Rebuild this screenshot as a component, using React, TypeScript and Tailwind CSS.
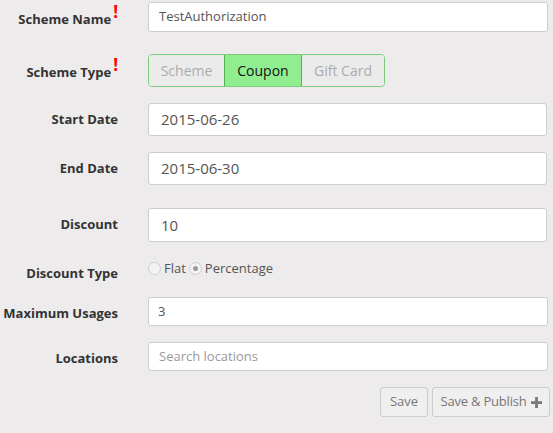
const font = { fontFamily: '"Open Sans", "Liberation Sans", sans-serif' };

function Label({ text, required, className = '' }: { text: string; required?: boolean; className?: string }) {
  return (
    <div className={`w-[118px] shrink-0 text-right text-[13px] font-bold text-[#333] ${className}`}>
      {text}
      {required && (
        <span className="relative -top-[6px] ml-[2px] text-[17px] font-bold leading-none text-[#ff0000]">!</span>
      )}
    </div>
  );
}

function Radio({ checked }: { checked?: boolean }) {
  return (
    <span className="flex h-[13px] w-[13px] items-center justify-center rounded-full border border-[#cfcfcf] bg-[#f3f3f3]">
      {checked && <span className="h-[5px] w-[5px] rounded-full bg-[#9a9a9a]" />}
    </span>
  );
}

export default function App() {
  return (
    <div className="h-[433px] w-[553px] overflow-hidden bg-[#edebeb] pt-[2px]" style={font}>
      <div className="flex h-[30px] items-center gap-[30px]">
        <Label text="Scheme Name" required className="mt-[4px]" />
        <div className="flex h-full w-[400px] items-center rounded-[3px] border border-[#cccccc] bg-white px-[10px] text-[13px] text-[#555]">
          TestAuthorization
        </div>
      </div>

      <div className="mt-[22px] flex h-[33px] items-center gap-[30px]">
        <Label text="Scheme Type" required className="mt-[4px]" />
        <div className="flex h-full overflow-hidden rounded-[4px] border border-[#7ccb7c] text-[14px]">
          <div className="flex w-[75px] items-center justify-center bg-[#ebebeb] text-[#ababab]">Scheme</div>
          <div className="flex w-[78px] items-center justify-center border-x border-[#4fb34f] bg-[#90ee90] text-[#111]">Coupon</div>
          <div className="flex w-[82px] items-center justify-center bg-[#ebebeb] text-[#ababab]">Gift Card</div>
        </div>
      </div>

      <div className="mt-[16px] flex h-[33px] items-center gap-[30px]">
        <Label text="Start Date" />
        <div className="flex h-full w-[399px] items-center rounded-[3px] border border-[#cccccc] bg-white px-[12px] text-[15px] text-[#555]">
          2015-06-26
        </div>
      </div>

      <div className="mt-[16px] flex h-[33px] items-center gap-[30px]">
        <Label text="End Date" />
        <div className="flex h-full w-[399px] items-center rounded-[3px] border border-[#cccccc] bg-white px-[12px] text-[15px] text-[#555]">
          2015-06-30
        </div>
      </div>

      <div className="mt-[23px] flex h-[34px] items-center gap-[30px]">
        <Label text="Discount" />
        <div className="flex h-full w-[399px] items-center rounded-[3px] border border-[#cccccc] bg-white px-[12px] text-[15px] text-[#555]">
          10
        </div>
      </div>

      <div className="mt-[16px] flex h-[39px] items-start gap-[30px]">
        <div className="pt-[6px]">
          <Label text="Discount Type" />
        </div>
        <div className="flex items-center gap-[3px] pt-[1px] text-[13px] text-[#555]">
          <Radio />
          <span>Flat</span>
          <Radio checked />
          <span>Percentage</span>
        </div>
      </div>

      <div className="flex h-[29px] items-center gap-[30px]">
        <Label text="Maximum Usages" className="mt-[4px]" />
        <div className="flex h-full w-[400px] items-center rounded-[3px] border border-[#cccccc] bg-white px-[9px] text-[13px] text-[#555]">
          3
        </div>
      </div>

      <div className="mt-[16px] flex h-[29px] items-center gap-[30px]">
        <Label text="Locations" className="mt-[4px]" />
        <div className="flex h-full w-[400px] items-center rounded-[3px] border border-[#cccccc] bg-white px-[10px] text-[13px] text-[#999]">
          Search locations
        </div>
      </div>

      <div className="mt-[16px] flex h-[30px] justify-end gap-[4px] pr-[3px]">
        <button className="h-full w-[48px] rounded-[3px] border border-[#cccccc] bg-[#f0efef] text-[13px] text-[#777]">Save</button>
        <button className="flex h-full w-[118px] items-center justify-center gap-[4px] rounded-[3px] border border-[#cccccc] bg-[#f0efef] text-[13px] tracking-[-0.2px] text-[#777]">
          Save &amp; Publish
          <svg width="11" height="11" viewBox="0 0 12 12">
            <path d="M4.5 0h3v4.5H12v3H7.5V12h-3V7.5H0v-3h4.5z" fill="#777" />
          </svg>
        </button>
      </div>
    </div>
  );
}
